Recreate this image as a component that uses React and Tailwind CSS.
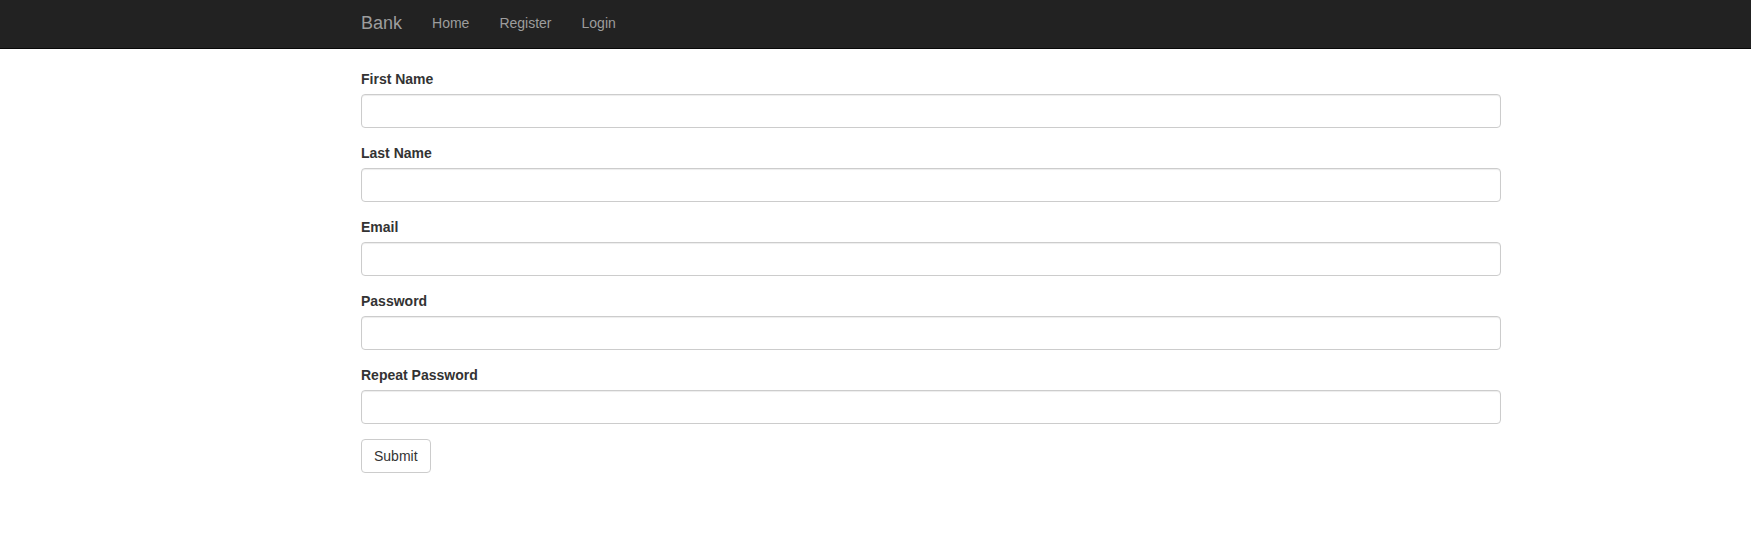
export default function App() {
  const fields = ["First Name", "Last Name", "Email", "Password", "Repeat Password"];
  return (
    <div className="min-h-[534px] bg-white text-[14px] leading-[20px] text-[#333]" style={{ fontFamily: '"Liberation Sans", Arial, sans-serif' }}>
      <nav className="h-[49px] border-b border-[#080808] bg-[#222]">
        <div className="ml-[346px] flex h-full w-[1170px] items-start px-[15px] pt-[13px]">
          <span className="mr-[30px] text-[18px] leading-[20px] text-[#9d9d9d]">Bank</span>
          <div className="flex gap-[30px] text-[#9d9d9d]">
            <span>Home</span>
            <span>Register</span>
            <span>Login</span>
          </div>
        </div>
      </nav>
      <div className="ml-[346px] mt-[20px] w-[1170px] px-[15px]">
        <form onSubmit={(e) => e.preventDefault()}>
          {fields.map((f) => (
            <div key={f} className="mb-[15px]">
              <label className="mb-[5px] block font-bold">{f}</label>
              <input
                type={f.includes("Password") ? "password" : "text"}
                className="block h-[34px] w-full rounded-[4px] border border-[#ccc] px-[12px] py-[6px] shadow-[inset_0_1px_1px_rgba(0,0,0,0.075)] outline-none"
              />
            </div>
          ))}
          <button
            type="submit"
            className="h-[34px] rounded-[4px] border border-[#ccc] bg-white px-[12px] text-[14px] text-[#333]"
          >
            Submit
          </button>
        </form>
      </div>
    </div>
  );
}
